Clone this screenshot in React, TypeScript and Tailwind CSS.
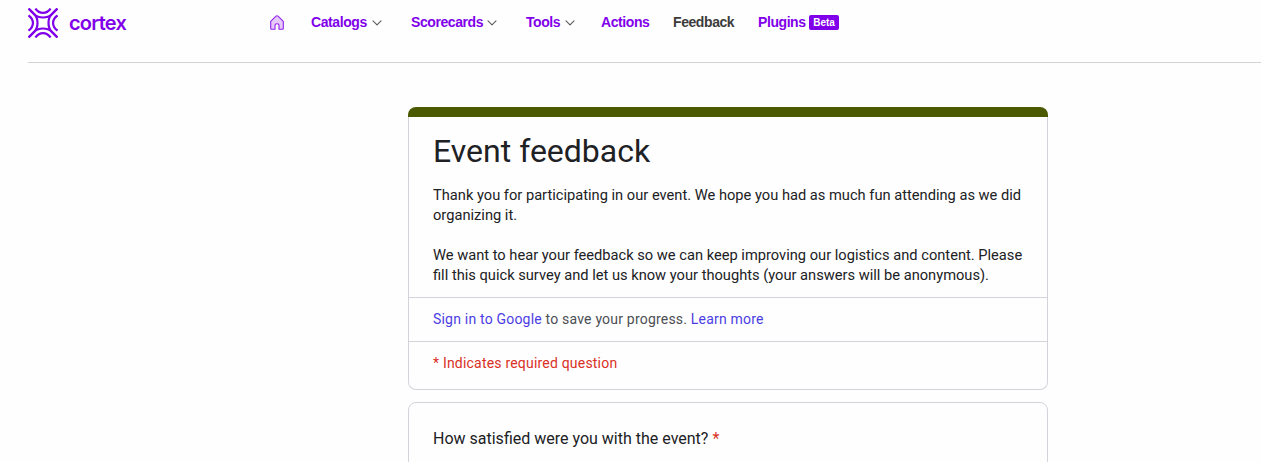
import React from "react";

function Logo() {
  return (
    <svg width="30" height="30" viewBox="0 0 30 30" fill="none" stroke="#8100ea" strokeWidth="2.2" strokeLinecap="butt">
      {[0, 90, 180, 270].map((angle) => (
        <g key={angle} transform={`rotate(${angle} 15 15)`}>
          <path d="M.6 .6L6.5 6.5C9 9 12 9.5 15 9.5S21 9 23.5 6.5L29.4 .6" />
          <path d="M7.4 .5C11.5 6.4 18.5 6.4 22.6 .5" />
        </g>
      ))}
    </svg>
  );
}

function HomeIcon() {
  return (
    <svg className="mt-[15px] shrink-0" width="14" height="15" viewBox="0 0 14 15" fill="#e6cbfa" stroke="#8f20ed" strokeWidth="1.1" strokeLinejoin="round">
      <path d="M.7 6.3L6 1.2Q7 .3 8 1.2L13.3 6.3V13.2Q13.3 14.2 12.3 14.2H9V10.6Q9 8.7 7 8.7T5 10.6V14.2H1.7Q.7 14.2.7 13.2Z" />
    </svg>
  );
}

function Chevron() {
  return (
    <svg className="ml-auto mt-[2px]" width="10" height="6" viewBox="0 0 10 6" fill="none" stroke="#5c5c5c" strokeWidth="1.1" strokeLinecap="round" strokeLinejoin="round">
      <path d="M1 .8L5 4.8L9 .8" />
    </svg>
  );
}

export default function App() {
  return (
    <div className="h-[462px] overflow-hidden bg-[#fefefe] font-['Roboto',sans-serif] text-[#202124]">
      <header className="ml-7 flex h-[63px] items-start border-b border-[#d3d3d3]">
        <a className="flex w-[242px] shrink-0 pt-2 text-[#8100ea]">
          <Logo />
          <span className="ml-[11px] mt-[2px] font-['Inter',sans-serif] text-[20px] leading-[26px] font-semibold tracking-[-0.8px]">cortex</span>
        </a>
        <HomeIcon />
        <nav className="ml-[27px] flex h-[18px] mt-[13px] items-center font-['Liberation_Sans',sans-serif] text-[14px] leading-[18px] font-bold tracking-[-0.42px] whitespace-nowrap text-[#8100ea]">
          <a className="mr-[29px] flex w-[71px] items-center">Catalogs<Chevron /></a>
          <a className="mr-[29px] flex w-[86px] items-center">Scorecards<Chevron /></a>
          <a className="mr-[26px] flex w-[49px] items-center">Tools<Chevron /></a>
          <a className="w-[72px]">Actions</a>
          <a className="w-[85px] text-[#3c3c3c]">Feedback</a>
          <a className="w-[51px]">Plugins</a>
          <span className="flex h-[15px] w-[30px] items-center justify-center rounded-[2px] bg-[#8100ea] text-[10px] leading-[15px] tracking-normal text-white">Beta</span>
        </nav>
      </header>

      <main className="ml-[408px] mt-11 w-[640px]">
        <section>
          <div className="h-[10px] rounded-t-lg bg-[#4b5a00]" />
          <div className="h-[273px] rounded-b-lg border border-t-0 border-[#d3d4d9] bg-[#fefefe]">
            <div className="h-[181px] border-b border-[#d3d4d9] px-6 pt-[13px]">
              <h1 className="text-[32px] leading-[43px]">Event feedback</h1>
              <p className="mt-3 text-[14.67px] leading-5">Thank you for participating in our event. We hope you had as much fun attending as we did<br />organizing it.</p>
              <p className="mt-5 text-[14.67px] leading-5">We want to hear your feedback so we can keep improving our logistics and content. Please<br />fill this quick survey and let us know your thoughts (your answers will be anonymous).</p>
            </div>
            <p className="flex h-11 items-center border-b border-[#d3d4d9] px-6 text-[14px] tracking-[0.2px] whitespace-pre text-[#4b4e53]">
              <a className="text-[#4b3de3]">Sign in to Google</a>{" to save your progress. "}<a className="text-[#4b3de3]">Learn more</a>
            </p>
            <p className="px-6 pt-[11px] text-[14px] leading-5 tracking-[0.2px] text-[#d93025]">* Indicates required question</p>
          </div>
        </section>
        <section className="mt-3 h-[200px] rounded-lg border border-[#d3d4d9] px-6 pt-6">
          <h2 className="text-[16px] leading-6">How satisfied were you with the event? <span className="text-[#d93025]">*</span></h2>
        </section>
      </main>
    </div>
  );
}
